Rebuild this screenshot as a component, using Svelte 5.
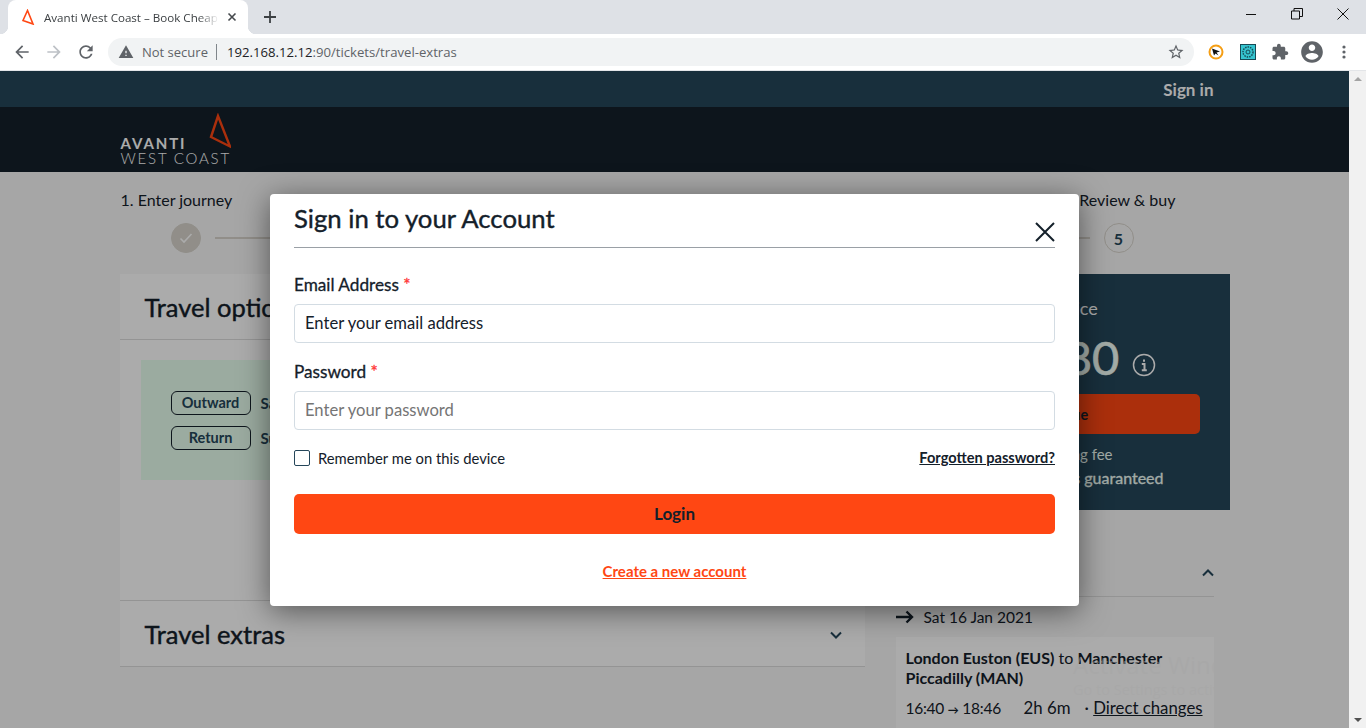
<script>
    const steps = [
        { label: '1. Enter journey', done: true },
        { label: '2. Select tickets' },
        { label: '3. Travel options' },
        { label: '4. Your details' },
        { label: '5. Review & buy' }
    ]
    let email = 'Enter your email address'
    let remember = false
</script>

<div class="chrome">
    <div class="tabstrip">
        <div class="tab">
            <svg class="favicon" width="16" height="16" viewBox="0 0 16 16"><path d="M7.500 1.500 3 11.500l10 3.500z" fill="none" stroke="#ff4713" stroke-width="1.600"/></svg>
            <span class="tabtitle">Avanti West Coast – Book Cheap Train Tickets</span>
            <svg width="10" height="10" viewBox="0 0 10 10"><path d="M1.500 1.500l7 7M8.500 1.500l-7 7" stroke="#45494d" stroke-width="1.600"/></svg>
        </div>
        <svg class="newtab" width="14" height="14" viewBox="0 0 14 14"><path d="M7 1v12M1 7h12" stroke="#3c4043" stroke-width="1.800"/></svg>
        <div class="winctl">
            <svg width="12" height="12" viewBox="0 0 12 12"><path d="M1 6.500h10" stroke="#111" stroke-width="1"/></svg>
            <svg width="12" height="12" viewBox="0 0 12 12"><path d="M.5 3h8v8h-8zM3 3V.5h8.500V8.500H8.500" fill="none" stroke="#111" stroke-width="1"/></svg>
            <svg width="12" height="12" viewBox="0 0 12 12"><path d="M.5.500l11 11M11.500.500l-11 11" stroke="#111" stroke-width="1"/></svg>
        </div>
    </div>
    <div class="toolbar">
        <svg class="navicon" width="20" height="20" viewBox="0 0 24 24"><path fill="#5f6368" d="M20 11H7.830l5.590-5.590L12 4l-8 8 8 8 1.410-1.410L7.830 13H20v-2z"/></svg>
        <svg class="navicon" width="20" height="20" viewBox="0 0 24 24"><path fill="#bdc1c6" d="M12 4l-1.410 1.410L16.170 11H4v2h12.170l-5.580 5.590L12 20l8-8z"/></svg>
        <svg class="navicon" width="20" height="20" viewBox="0 0 24 24"><path fill="#5f6368" d="M17.650 6.350C16.200 4.900 14.210 4 12 4c-4.420 0-7.990 3.580-7.990 8s3.570 8 7.990 8c3.730 0 6.840-2.550 7.730-6h-2.080c-.82 2.330-3.040 4-5.650 4-3.310 0-6-2.690-6-6s2.690-6 6-6c1.660 0 3.140.69 4.220 1.780L13 11h7V4l-2.350 2.350z"/></svg>
        <div class="omnibox">
            <svg width="16" height="16" viewBox="0 0 24 24"><path fill="#5f6368" d="M1 21h22L12 2 1 21zm12-3h-2v-2h2v2zm0-4h-2v-4h2v4z"/></svg>
            <span class="secure">Not secure</span>
            <span class="divider"></span>
            <span class="url"><b>192.168.12.12</b>:90/tickets/travel-extras</span>
            <svg class="star" width="18" height="18" viewBox="0 0 24 24"><path fill="#5f6368" d="M22 9.240l-7.190-.62L12 2 9.190 8.630 2 9.240l5.460 4.730L5.820 21 12 17.270 18.180 21l-1.630-7.030L22 9.240zM12 15.400l-3.760 2.270 1-4.280-3.320-2.880 4.380-.38L12 6.100l1.710 4.040 4.380.38-3.320 2.880 1 4.280L12 15.400z"/></svg>
        </div>
        <div class="extensions">
            <svg width="16" height="16" viewBox="0 0 16 16"><circle cx="8" cy="8" r="6.500" fill="#fff" stroke="#f59e14" stroke-width="2"/><path d="M4 4.500l8 3-3.500 1 2 3-3-2-1.500 2z" fill="#111"/></svg>
            <svg class="ext2" width="16" height="16" viewBox="0 0 16 16"><rect x=".5" y=".5" width="15" height="15" fill="#35c4cf" stroke="#174a55"/><circle cx="8" cy="8" r="5" fill="none" stroke="#174a55" stroke-width="1.500" stroke-dasharray="1.500 1"/><circle cx="8" cy="8" r="2" fill="none" stroke="#174a55"/></svg>
            <svg class="ext3" width="18" height="18" viewBox="0 0 24 24"><path fill="#5f6368" d="M20.500 11H19V7c0-1.100-.9-2-2-2h-4V3.500C13 2.120 11.880 1 10.500 1S8 2.120 8 3.500V5H4c-1.100 0-1.990.9-1.990 2v3.800H3.500c1.490 0 2.700 1.210 2.700 2.700s-1.210 2.700-2.700 2.700H2V20c0 1.100.9 2 2 2h3.800v-1.500c0-1.490 1.210-2.700 2.700-2.700 1.490 0 2.700 1.210 2.700 2.700V22H17c1.100 0 2-.9 2-2v-4h1.500c1.380 0 2.500-1.120 2.500-2.500S21.880 11 20.500 11z"/></svg>
            <svg class="ext4" width="26" height="26" viewBox="0 0 24 24"><path fill="#5f6368" d="M12 2C6.480 2 2 6.480 2 12s4.480 10 10 10 10-4.480 10-10S17.520 2 12 2zm0 3c1.660 0 3 1.340 3 3s-1.340 3-3 3-3-1.340-3-3 1.340-3 3-3zm0 14.200c-2.500 0-4.710-1.280-6-3.220.03-1.990 4-3.080 6-3.080 1.990 0 5.970 1.090 6 3.080-1.290 1.940-3.500 3.220-6 3.220z"/></svg>
            <svg class="ext5" width="16" height="16" viewBox="0 0 16 16"><g fill="#5f6368"><circle cx="8" cy="3" r="1.600"/><circle cx="8" cy="8" r="1.600"/><circle cx="8" cy="13" r="1.600"/></g></svg>
        </div>
    </div>
</div>

<div class="viewport">
    <div class="page">
        <div class="topbar"><div class="container signin">Sign in</div></div>
        <header class="brand">
            <div class="container">
                <div class="logo">
                    <svg width="24" height="36" viewBox="0 0 24 36"><path d="M11 3 4 24l19 9.500z" fill="none" stroke="#ff4713" stroke-width="2.400"/></svg>
                    <div class="avanti">AVANTI</div>
                    <div class="westcoast">WEST COAST</div>
                </div>
            </div>
        </header>

        <div class="container">
            <div class="stepper">
                <div class="labels">
                    {#each steps as step}
                        <span>{step.label}</span>
                    {/each}
                </div>
                <div class="track">
                    {#each steps as step, i}
                        {#if i > 0}<span class="line"></span>{/if}
                        <span class="dot" class:done={step.done}>
                            {#if step.done}
                                <svg width="16" height="16" viewBox="0 0 16 16"><path d="M2.500 8.500l3.500 3.500 7.500-8" fill="none" stroke="#fff" stroke-width="1.600"/></svg>
                            {:else}
                                {i + 1}
                            {/if}
                        </span>
                    {/each}
                </div>
            </div>

            <div class="columns">
                <main class="panel">
                    <section class="options">
                        <h2>Travel options</h2>
                        <div class="summary">
                            <div class="leg"><span class="pill">Outward</span><b>Sat 16 Jan 2021</b></div>
                            <div class="leg"><span class="pill">Return</span><b>Sun 17 Jan 2021</b></div>
                        </div>
                    </section>
                    <section class="extras">
                        <h2>Travel extras</h2>
                        <svg width="14" height="10" viewBox="0 0 14 10"><path d="M2 2.500l5 5 5-5" fill="none" stroke="#25465a" stroke-width="2"/></svg>
                    </section>
                </main>

                <aside class="side">
                    <div class="price">
                        <div class="pricelabel">Total price</div>
                        <div class="amount">£20.80<svg width="24" height="24" viewBox="0 0 24 24"><circle cx="12" cy="12" r="10.500" fill="none" stroke="#fff" stroke-width="1.500"/><path d="M12 6.500v2.200M9.800 11h2.700v6M9.800 17.300h5" fill="none" stroke="#fff" stroke-width="2"/></svg></div>
                        <button class="continue">Continue</button>
                        <div class="perk">No booking fee</div>
                        <div class="perk strong">Cheapest prices guaranteed</div>
                    </div>
                    <div class="journey">
                        <div class="journeyhead">
                            <h3>Your journey</h3>
                            <svg width="14" height="10" viewBox="0 0 14 10"><path d="M2 7.500l5-5 5 5" fill="none" stroke="#25465a" stroke-width="2"/></svg>
                        </div>
                        <div class="date">
                            <svg width="18" height="14" viewBox="0 0 18 14"><path d="M0 7h16M10.500 1.500 16 7l-5.500 5.500" fill="none" stroke="#14202a" stroke-width="2.400"/></svg>
                            Sat 16 Jan 2021
                        </div>
                        <div class="trip">
                            <p><b>London Euston (EUS)</b> to <b>Manchester Piccadilly (MAN)</b></p>
                            <div class="times">
                                <span class="t1">16:40 <small>→</small> 18:46</span>
                                <span class="t2">2h 6m</span>
                                <span>· <u>Direct changes</u></span>
                            </div>
                        </div>
                    </div>
                </aside>
            </div>
        </div>

        <div class="backdrop">
            <div class="modal">
                <div class="modalhead">
                    <h1>Sign in to your Account</h1>
                    <svg width="20" height="20" viewBox="0 0 20 20"><path d="M1 1l18 18M19 1 1 19" stroke="#14202a" stroke-width="2"/></svg>
                </div>
                <label class="field" for="email">Email Address <i>*</i></label>
                <input id="email" type="text" bind:value={email} />
                <label class="field pw" for="password">Password <i>*</i></label>
                <input id="password" type="password" placeholder="Enter your password" />
                <div class="rememberrow">
                    <label class="remember"><input type="checkbox" bind:checked={remember} /> Remember me on this device</label>
                    <a href="#forgot">Forgotten password?</a>
                </div>
                <button class="login">Login</button>
                <a class="create" href="#create">Create a new account</a>
            </div>
        </div>

        <div class="watermark">
            <div>Activate Windows</div>
            <small>Go to Settings to activate Windows.</small>
        </div>
    </div>
    <div class="scrollbar">
        <span class="up"></span>
        <span class="down"></span>
    </div>
</div>

<style>
    :global(body) {
        margin: 0;
        overflow: hidden;
        font-family: Lato, "Open Sans", sans-serif;
        color: #14202a;
    }
    * {
        box-sizing: border-box;
    }
    h1, h2, h3, p {
        margin: 0;
    }

    /* browser */
    .chrome {
        height: 71px;
        font-family: "Open Sans", Roboto, sans-serif;
    }
    .tabstrip {
        height: 34px;
        background: #dee1e6;
        display: flex;
        align-items: center;
        padding-left: 8px;
    }
    .tab {
        width: 240px;
        height: 34px;
        background: #fff;
        border-radius: 8px 8px 0 0;
        display: flex;
        align-items: center;
        padding: 0 11px 0 12px;
        position: relative;
    }
    .tab::before, .tab::after {
        content: '';
        position: absolute;
        bottom: 0;
        width: 8px;
        height: 8px;
    }
    .tab::before {
        left: -8px;
        background: radial-gradient(circle at 0 0, transparent 8px, #fff 8.500px);
    }
    .tab::after {
        right: -8px;
        background: radial-gradient(circle at 100% 0, transparent 8px, #fff 8.500px);
    }
    .favicon {
        flex: none;
    }
    .tabtitle {
        flex: 1;
        margin: 0 8px;
        font-size: 11.600px;
        color: #3c4043;
        white-space: nowrap;
        overflow: hidden;
        -webkit-mask-image: linear-gradient(to right, #000 88%, transparent);
        mask-image: linear-gradient(to right, #000 88%, transparent);
    }
    .newtab {
        margin-left: 15px;
    }
    .winctl {
        margin-left: auto;
        display: flex;
        gap: 34px;
        padding-right: 17px;
        margin-top: -6px;
    }
    .toolbar {
        height: 37px;
        background: #fff;
        display: flex;
        align-items: center;
        padding: 0 0 1px 12px;
        border-bottom: 1px solid #e3e5e8;
    }
    .navicon {
        margin-right: 12px;
    }
    .omnibox {
        width: 1086px;
        height: 28px;
        background: #f1f3f4;
        border-radius: 14px;
        display: flex;
        align-items: center;
        padding: 0 9px 0 10px;
    }
    .secure {
        margin-left: 8px;
        font-size: 13px;
        color: #5f6368;
    }
    .divider {
        width: 1px;
        height: 16px;
        background: #80868b;
        margin: 0 10px 0 8px;
    }
    .url {
        font-size: 13.150px;
        color: #5f6368;
    }
    .url b {
        font-weight: 400;
        color: #202124;
    }
    .star {
        margin-left: auto;
    }
    .extensions {
        flex: 1;
        display: flex;
        align-items: center;
        padding-left: 14px;
    }
    .ext2 {
        margin-left: 16px;
    }
    .ext3 {
        margin-left: 15px;
    }
    .ext4 {
        margin-left: 10px;
    }
    .ext5 {
        margin-left: 11px;
    }

    /* site */
    .viewport {
        height: 657px;
        display: flex;
        overflow: hidden;
    }
    .page {
        flex: 1;
        position: relative;
        background: #f8f8f8;
        overflow: hidden;
    }
    .container {
        width: 1110px;
        margin: 0 auto;
    }
    .topbar {
        height: 36px;
        background: #25465a;
    }
    .signin {
        text-align: right;
        padding: 8px 16px 0 0;
        color: #fff;
        font-weight: 700;
        font-size: 17px;
    }
    .brand {
        height: 65px;
        background: #14202a;
    }
    .logo {
        width: 110px;
        padding-top: 6px;
        margin-left: 1px;
        color: #fff;
        display: flex;
        flex-direction: column;
        white-space: nowrap;
    }
    .logo svg {
        align-self: flex-end;
        margin-bottom: -13px;
    }
    .avanti {
        font-weight: 700;
        font-size: 15px;
        letter-spacing: 1.900px;
        line-height: 14px;
    }
    .westcoast {
        font-weight: 300;
        font-size: 15px;
        letter-spacing: 1.800px;
        line-height: 16px;
    }

    .stepper {
        padding-top: 18px;
        height: 102px;
    }
    .labels {
        display: flex;
        justify-content: space-between;
        padding: 0 54px 0 1px;
        font-size: 16px;
        line-height: 20px;
    }
    .track {
        display: flex;
        align-items: center;
        margin: 13px 81px 0 36px;
    }
    .line {
        flex: 1;
        height: 2px;
        margin: 0 -1px;
        background: #d8d4cc;
    }
    .dot {
        width: 30px;
        height: 30px;
        border-radius: 50%;
        border: 1px solid #d8d4cc;
        background: #f8f8f8;
        display: flex;
        align-items: center;
        justify-content: center;
        font-weight: 700;
        font-size: 16px;
        color: #25465a;
        margin: 0 15px;
    }
    .dot.done {
        background: #d8d4cc;
    }

    .columns {
        display: flex;
        gap: 31px;
    }
    .panel {
        width: 745px;
        height: 393px;
        background: #fff;
        display: flex;
        flex-direction: column;
        border-bottom: 1px solid #ddd;
    }
    .options {
        height: 327px;
        border-bottom: 1px solid #ddd;
    }
    h2 {
        font-size: 25.500px;
        font-weight: 400;
        -webkit-text-stroke: 0.4px currentColor;
        line-height: 30px;
    }
    .options h2 {
        box-sizing: content-box;
        height: 30px;
        padding: 18px 25px 17px;
        border-bottom: 1px solid #ddd;
    }
    .summary {
        margin: 20px 0 0 21px;
        width: 600px;
        height: 120px;
        background: #e8ffef;
        padding: 31px 30px;
        display: flex;
        flex-direction: column;
        gap: 11px;
    }
    .leg {
        display: flex;
        align-items: center;
        gap: 10px;
        font-size: 15px;
        color: #25465a;
    }
    .pill {
        width: 80px;
        height: 24px;
        border: 1px solid #14202a;
        border-radius: 6px;
        font-weight: 700;
        font-size: 14.500px;
        line-height: 22px;
        text-align: center;
    }
    .extras {
        flex: 1;
        display: flex;
        align-items: center;
        justify-content: space-between;
        padding: 1px 22px 0 25px;
    }
    .extras svg {
        margin-top: 1px;
    }

    .side {
        width: 334px;
    }
    .price {
        height: 236px;
        background: #25465a;
        color: #fff;
        padding: 23px 30px 0 29px;
        text-align: center;
    }
    .pricelabel {
        font-size: 18px;
        line-height: 22px;
        padding-right: 10px;
    }
    .amount {
        margin-top: 12px;
        padding-left: 4px;
        font-size: 47px;
        line-height: 52px;
        font-weight: 400;
        -webkit-text-stroke: 0.6px currentColor;
        color: #f2fff8;
    }
    .amount svg {
        margin-left: 13px;
        vertical-align: -2px;
    }
    .continue {
        display: block;
        width: 100%;
        height: 40px;
        margin-top: 11px;
        padding: 0 7px 0 0;
        border: 0;
        border-radius: 5px;
        background: #ff4713;
        font: 700 14.500px Lato, sans-serif;
        color: #14202a;
    }
    .perk {
        margin-top: 9px;
        font-size: 15px;
        line-height: 22px;
        color: #f2fff8;
    }
    .perk.strong {
        margin-top: 2px;
        padding-left: 8px;
        font-size: 16px;
        -webkit-text-stroke: 0.3px currentColor;
        white-space: nowrap;
    }
    .journey {
        width: 318px;
        padding-top: 46px;
    }
    .journeyhead {
        height: 41px;
        display: flex;
        justify-content: space-between;
        border-bottom: 1px solid #ddd;
    }
    .journeyhead h3 {
        font-size: 18px;
    }
    .journeyhead svg {
        margin: 12px -1px 0 0;
    }
    .date {
        display: flex;
        align-items: center;
        gap: 10px;
        height: 40px;
        font-size: 15.500px;
    }
    .trip {
        background: #fff;
        padding: 11px 10px 0;
        height: 120px;
        font-size: 16px;
        line-height: 20px;
    }
    .times {
        margin-top: 10px;
        display: flex;
        font-size: 16.800px;
    }
    .times small {
        font-size: 11px;
        font-weight: 700;
    }
    .t1 {
        width: 118px;
        font-size: 15.500px;
        letter-spacing: -0.25px;
    }
    .t2 {
        width: 61px;
    }

    .backdrop {
        position: absolute;
        inset: 0;
        background: rgba(0, 0, 0, 0.33);
        display: flex;
        justify-content: center;
        align-items: flex-start;
        padding-top: 123px;
    }
    .modal {
        width: 809px;
        height: 412px;
        background: #fff;
        border-radius: 4px;
        padding: 0 24px;
        box-shadow: 0 5px 30px rgba(0, 0, 0, 0.5);
        display: flex;
        flex-direction: column;
    }
    .modalhead {
        height: 54px;
        display: flex;
        justify-content: space-between;
        border-bottom: 1px solid #9aa0a6;
    }
    h1 {
        font-size: 25.700px;
        font-weight: 400;
        -webkit-text-stroke: 0.4px currentColor;
        line-height: 30px;
        margin-top: 9px;
    }
    .modalhead svg {
        margin: 28px 0 0;
    }
    .field {
        font-weight: 400;
        -webkit-text-stroke: 0.3px currentColor;
        font-size: 17.200px;
        line-height: 20px;
        margin-top: 27px;
        margin-bottom: 9px;
    }
    .field.pw {
        margin-top: 19px;
    }
    .field i {
        color: #f33;
        font-style: normal;
    }
    input[type='text'], input[type='password'] {
        height: 39px;
        border: 1px solid #d3dce3;
        border-radius: 4px;
        padding: 0 10px 2px 10px;
        font: 16.600px Lato, sans-serif;
        color: #14202a;
        outline: none;
    }
    input::placeholder {
        color: #757575;
        opacity: 1;
    }
    .rememberrow {
        display: flex;
        justify-content: space-between;
        align-items: center;
        margin-top: 19px;
        height: 18px;
    }
    .remember {
        display: flex;
        align-items: center;
        font-size: 14.800px;
    }
    .remember input {
        appearance: none;
        width: 16px;
        height: 16px;
        margin: 0 8px 0 0;
        border: 1px solid #25465a;
        border-radius: 2px;
    }
    .rememberrow a {
        font-size: 14.600px;
        font-weight: 700;
        color: #14202a;
        margin-top: -1px;
    }
    .login {
        height: 40px;
        margin-top: 27px;
        padding-bottom: 3px;
        border: 0;
        border-radius: 5px;
        background: #ff4713;
        font: 700 17px Lato, sans-serif;
        color: #14202a;
    }
    .create {
        margin-top: 28px;
        text-align: center;
        font-size: 15px;
        font-weight: 700;
        color: #ff4713;
    }

    .watermark {
        position: absolute;
        left: 1073px;
        top: 579px;
        width: 276px;
        font-family: "Open Sans", sans-serif;
        font-size: 24px;
        line-height: 30px;
        color: rgba(166, 166, 166, 0.5);
        white-space: nowrap;
    }
    .watermark small {
        display: block;
        font-size: 14.500px;
        line-height: 20px;
    }

    .scrollbar {
        width: 17px;
        background: #f1f1f1;
        display: flex;
        flex-direction: column;
        justify-content: space-between;
        align-items: center;
        padding: 6px 0;
    }
    .up, .down {
        width: 0;
        height: 0;
        border-left: 4px solid transparent;
        border-right: 4px solid transparent;
    }
    .up {
        border-bottom: 4px solid #a3a3a3;
    }
    .down {
        border-top: 4px solid #505050;
    }
</style>
